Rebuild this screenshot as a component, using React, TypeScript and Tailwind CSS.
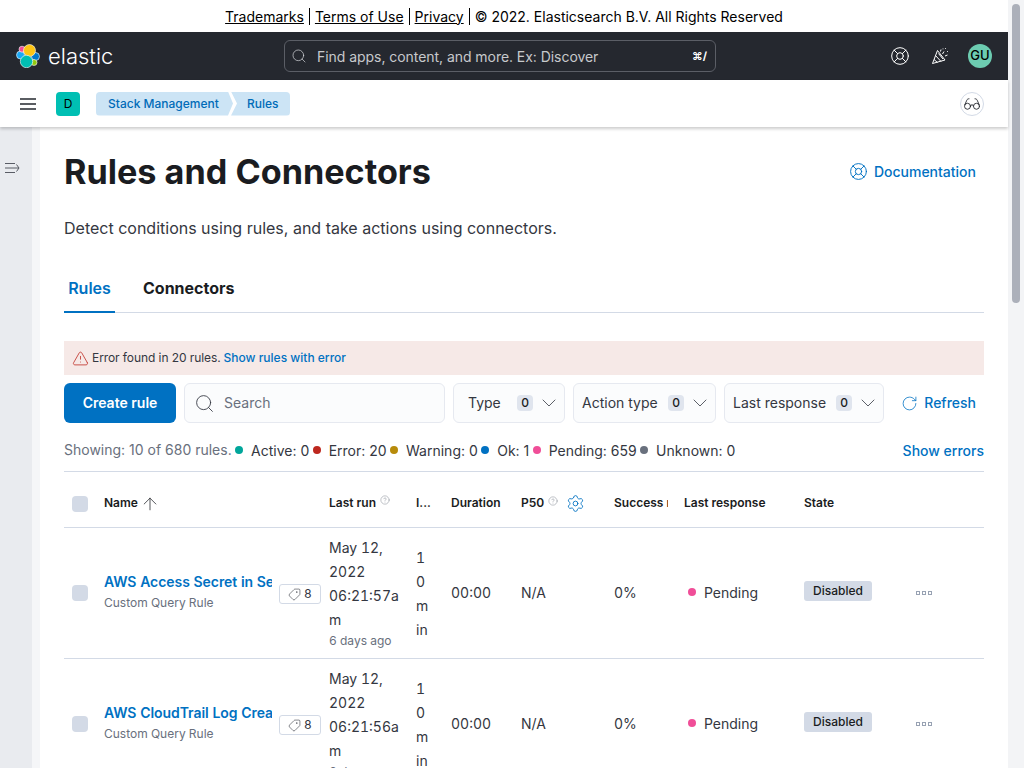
import { ArrowUp, ChevronDown, CircleHelp, Glasses, LifeBuoy, RotateCw, Search, Settings, Tag, TriangleAlert } from 'lucide-react';

const COLS = 'grid grid-cols-[40px_168px_57px_87px_35px_70px_93px_70px_120px_111px_69px]';

const rules = [
  { name: 'AWS Access Secret in Secrets Manager', time: '06:21:57am' },
  { name: 'AWS CloudTrail Log Created', time: '06:21:56am' },
];

const counts = [
  { dot: 'bg-[#00a69b]', label: 'Active: 0' },
  { dot: 'bg-[#bd271e]', label: 'Error: 20' },
  { dot: 'bg-[#b78b0a]', label: 'Warning: 0' },
  { dot: 'bg-[#0071c2]', label: 'Ok: 1' },
  { dot: 'bg-[#f04e98]', label: 'Pending: 659' },
  { dot: 'bg-[#69707d]', label: 'Unknown: 0' },
];

function ElasticLogo() {
  return (
    <svg width="24" height="24" viewBox="0 0 24 24" className="shrink-0">
      <circle cx="4.5" cy="11" r="4" fill="#1ba9f5" stroke="#fff" strokeWidth="0.6" />
      <circle cx="6" cy="5.2" r="3" fill="#f04e98" stroke="#fff" strokeWidth="0.6" />
      <circle cx="19.5" cy="12.5" r="4" fill="#0077cc" stroke="#fff" strokeWidth="0.6" />
      <circle cx="18" cy="18.5" r="3" fill="#93c90e" stroke="#fff" strokeWidth="0.6" />
      <circle cx="13.5" cy="6.5" r="6" fill="#fec514" stroke="#fff" strokeWidth="0.6" />
      <circle cx="10.5" cy="17.5" r="6.2" fill="#00bfb3" stroke="#fff" strokeWidth="0.6" />
    </svg>
  );
}

function PopperIcon() {
  return (
    <svg width="18" height="18" viewBox="0 0 18 18" fill="none" stroke="#fff" strokeWidth="1" className="ml-[21px]">
      <path d="M1.5 16.5 6.5 3.5l7.5 9.5z" />
      <path d="M4.5 8.5l5.5 6M3 12.5l3.5 3M7.5 6.5l4.5 5.5" />
      <path d="M10 2.5l-.5 2M13 4.5l-1.5 2.5M16.5 8l-2.5 1M14.5 1v.8M16.5 4v.8M12 1.5v.8" />
    </svg>
  );
}

function FilterButton({ label, width }: { label: string; width: string }) {
  return (
    <div className={`flex h-10 items-center rounded-md border border-[#e6e9f0] bg-[#fbfcfd] pr-[3px] text-[14px] text-[#343741] ${width}`}>
      <span className="flex-1 whitespace-nowrap pb-[2px]">{label}</span>
      <span className="mr-[4px] flex h-[16px] w-[16px] items-center justify-center rounded bg-[#e0e5ee] text-[12px] font-medium text-[#1a1c21]">0</span>
      <ChevronDown size={24} strokeWidth={0.8} />
    </div>
  );
}

function RuleRow({ name, time }: { name: string; time: string }) {
  return (
    <div className={`${COLS} h-[131px] items-center border-b border-[#d3dae6] text-[14px] tabular-nums text-[#343741]`}>
      <div className="pl-[8px]">
        <div className="h-4 w-4 rounded bg-[#d3dae6]" />
      </div>
      <div className="overflow-hidden pb-[2px]">
        <div className="whitespace-nowrap text-[14px] font-semibold leading-[21px] tracking-[-0.05px] text-[#0071c2]">{name}</div>
        <div className="mt-[1px] whitespace-nowrap text-[12px] leading-[20px] text-[#69707d]">Custom Query Rule</div>
      </div>
      <div className="pl-[7px] pt-[2px]">
        <div className="flex h-[20px] w-[42px] items-center justify-center gap-[3px] rounded-[3px] border border-[#d3dae6] text-[12px] text-[#343741]">
          <Tag size={13} strokeWidth={1.1} className="-scale-x-100" />
          8
        </div>
      </div>
      <div className="self-start pt-[8px] leading-[24px]">
        <div className="w-[71px] break-all">
          May 12,
          <br />
          2022
          <br />
          {time}
        </div>
        <div className="text-[12px] leading-[18px] text-[#69707d]">6 days ago</div>
      </div>
      <div className="w-[12px] break-all pt-[2px] leading-[24px]">10 min</div>
      <div className="pb-[2px]">00:00</div>
      <div className="pb-[2px]">N/A</div>
      <div className="pb-[2px]">0%</div>
      <div className="flex items-center gap-[8px] pb-[2px] pl-[4px]">
        <span className="h-2 w-2 rounded-full bg-[#f04e98]" />
        Pending
      </div>
      <div>
        <span className="-mt-[4px] block w-[68px] rounded-[3px] bg-[#d3dae6] text-center text-[12px] font-medium leading-[20px] text-[#1a1c21]">Disabled</span>
      </div>
      <div className="flex gap-[2px] pl-[1px]">
        <span className="h-1 w-1 border border-[#98a2b3]" />
        <span className="h-1 w-1 border border-[#98a2b3]" />
        <span className="h-1 w-1 border border-[#98a2b3]" />
      </div>
    </div>
  );
}

export default function App() {
  return (
    <div className="flex h-[768px] overflow-hidden bg-white font-['Inter',sans-serif] text-[#343741]">
      <div className="flex h-full w-[1008px] flex-col">
        <div className="flex h-8 shrink-0 items-center justify-center gap-[5px] text-[14px] text-black">
          <span className="underline">Trademarks</span>
          <span className="h-[17px] border-l border-black" />
          <span className="underline">Terms of Use</span>
          <span className="h-[17px] border-l border-black" />
          <span className="underline">Privacy</span>
          <span className="h-[17px] border-l border-black" />
          <span>© 2022. Elasticsearch B.V. All Rights Reserved</span>
        </div>

        <div className="flex h-12 shrink-0 items-center bg-[#25282f] pl-[16px] pr-[16px] text-white">
          <div className="flex w-[268px] items-center gap-[8px]">
            <ElasticLogo />
            <span className="text-[22px] font-light leading-none">elastic</span>
          </div>
          <div className="flex h-8 w-[432px] items-center rounded-md border border-[#5b5e66] pl-[6px] pr-[8px] text-[14px] text-[#c7c9cc]">
            <Search size={16} strokeWidth={1} className="text-[#dfe1e5]" />
            <span className="ml-[10px] flex-1 tracking-[-0.05px]">Find apps, content, and more. Ex: Discover</span>
            <span className="text-[11px] font-bold text-white">⌘/</span>
          </div>
          <div className="ml-auto flex items-center">
            <LifeBuoy size={20} strokeWidth={1.2} />
            <PopperIcon />
            <div className="ml-[19px] flex h-6 w-6 items-center justify-center rounded-full bg-[#6dccb1] text-[13px] font-medium text-black">GU</div>
          </div>
        </div>

        <div className="relative z-10 flex h-[47px] shrink-0 items-center bg-white pl-[20px] pr-[24px] shadow-[0_2px_3px_rgba(0,0,0,0.2)]">
          <svg width="16" height="14" viewBox="0 0 16 14" stroke="#25282f" strokeWidth="1.7">
            <path d="M0 2h16M0 7h16M0 12h16" />
          </svg>
          <div className="ml-[20px] flex h-6 w-6 items-center justify-center rounded bg-[#00bfb3] text-[12px] text-black">D</div>
          <div className="ml-[16px] flex text-[12px] font-medium text-[#006bb8]">
            <span className="flex h-6 w-[137px] items-center rounded-l bg-[#cce4f5] pl-[12px] [clip-path:polygon(0_0,132px_0,137px_50%,132px_100%,0_100%)]">Stack Management</span>
            <span className="-ml-[2px] flex h-6 w-[59px] items-center rounded-r bg-[#cce4f5] pl-[16px] [clip-path:polygon(0_0,100%_0,100%_100%,0_100%,6px_50%)]">Rules</span>
          </div>
          <div className="ml-auto flex h-6 w-6 items-center justify-center rounded-full border border-[#d3dae6]">
            <Glasses size={18} strokeWidth={1.2} className="text-[#25282f]" />
          </div>
        </div>

        <div className="flex min-h-0 flex-1">
          <div className="w-[32px] shrink-0 bg-[#e9ebef] pl-[5px] pt-[35px]">
            <svg width="15" height="12" viewBox="0 0 15 12" fill="none" stroke="#343741" strokeWidth="0.8">
              <path d="M0 1.5h10M0 6h13.5M0 10.5h10M11.5 2.5 14 6l-2.5 3.5" />
            </svg>
          </div>
          <div className="w-[8px] shrink-0 bg-[#f5f6f8]" />
          <div className="min-w-0 flex-1 overflow-hidden bg-white pl-[24px] pr-[24px] pt-[24px]">
            <div className="flex items-center justify-between">
              <h1 className="text-[34.2px] font-bold leading-[42px] text-[#1a1c21]">Rules and Connectors</h1>
              <div className="-mt-[2px] mr-[8px] flex items-center gap-[6px] text-[14px] font-medium text-[#0071c2]">
                <LifeBuoy size={19} strokeWidth={1.2} />
                Documentation
              </div>
            </div>
            <p className="mt-[23px] text-[16px] leading-[24px]">Detect conditions using rules, and take actions using connectors.</p>

            <div className="mt-[25px] flex h-[48px] border-b border-[#d3dae6] text-[16px] font-bold">
              <div className="flex h-[48px] w-[51px] items-center justify-center border-b-2 border-[#0071c2] font-semibold text-[#0071c2]">Rules</div>
              <div className="ml-[28px] flex h-[48px] items-center border-b-2 border-transparent text-[#1a1c21]">Connectors</div>
            </div>

            <div className="mt-[28px] flex h-[34px] items-center bg-[#f6e9e7] pl-[8px] text-[12px]">
              <TriangleAlert size={17} strokeWidth={1.1} className="text-[#bd271e]" />
              <span className="ml-[3px] tracking-[-0.08px]">Error found in 20 rules.</span>
              <span className="ml-[3px] font-medium text-[#0071c2]">Show rules with error</span>
            </div>

            <div className="mt-[8px] flex items-center">
              <div className="flex h-10 w-[112px] items-center justify-center rounded-md bg-[#0071c2] pb-[2px] text-[14px] font-semibold text-white">Create rule</div>
              <div className="ml-[8px] flex h-10 w-[261px] items-center rounded-md border border-[#e6e9f0] bg-[#fbfcfd] pl-[9px] text-[14px] text-[#69707d]">
                <Search size={21} strokeWidth={1} className="text-[#343741]" />
                <span className="ml-[9px] pb-[2px]">Search</span>
              </div>
              <div className="ml-[8px] flex gap-[8px]">
                <FilterButton label="Type" width="w-[112px] pl-[14px]" />
                <FilterButton label="Action type" width="w-[143px] pl-[8px]" />
                <FilterButton label="Last response" width="w-[160px] pl-[8px]" />
              </div>
              <div className="ml-auto mr-[8px] flex items-center gap-[6px] text-[14px] font-medium text-[#0071c2]">
                <RotateCw size={17} strokeWidth={1.1} />
                <span className="pb-[2px]">Refresh</span>
              </div>
            </div>

            <div className="mt-[11px] flex h-[32px] items-center text-[14px]">
              <span className="-mt-[1px] text-[#69707d]">Showing: 10 of 680 rules.</span>
              {counts.map((c) => (
                <span key={c.label} className="flex items-center">
                  <span className={`ml-[3.4px] h-2 w-2 rounded-full ${c.dot}`} />
                  <span className="ml-[8px] mt-[1px]">{c.label}</span>
                </span>
              ))}
              <span className="ml-auto font-medium text-[#0071c2]">Show errors</span>
            </div>

            <div className="mt-[5px] border-t border-[#d3dae6]">
              <div className={`${COLS} h-[56px] items-center border-b border-[#d3dae6] pt-[8px] text-[12px] font-semibold text-[#1a1c21]`}>
                <div className="pl-[8px]">
                  <div className="h-4 w-4 rounded bg-[#d3dae6]" />
                </div>
                <div className="flex items-center gap-[2px]">
                  <span className="pb-[2px]">Name</span>
                  <ArrowUp size={20} strokeWidth={0.9} />
                </div>
                <div />
                <div className="flex items-start gap-[4px] pb-[2px]">
                  Last run
                  <CircleHelp size={10} strokeWidth={1} className="mt-[1px] text-[#69707d]" />
                </div>
                <div className="pb-[2px]">I...</div>
                <div className="pb-[2px]">Duration</div>
                <div className="flex items-center">
                  <span className="-mt-[1px]">P50</span>
                  <CircleHelp size={10} strokeWidth={1} className="-mt-[5px] ml-[4px] text-[#69707d]" />
                  <Settings size={19} strokeWidth={1.1} className="ml-[8px] text-[#0071c2]" />
                </div>
                <div className="w-[54px] overflow-hidden whitespace-nowrap pb-[2px]">Success ratio</div>
                <div className="pb-[2px]">Last response</div>
                <div className="pb-[2px]">State</div>
                <div />
              </div>
              {rules.map((r) => (
                <RuleRow key={r.name} name={r.name} time={r.time} />
              ))}
            </div>
          </div>
        </div>
      </div>

      <div className="h-full w-[16px] shrink-0 bg-[#f3f4f6] pl-[4px] pt-[4px]">
        <div className="h-[299px] w-[8px] rounded-full bg-[#acb0ba]" />
      </div>
    </div>
  );
}
